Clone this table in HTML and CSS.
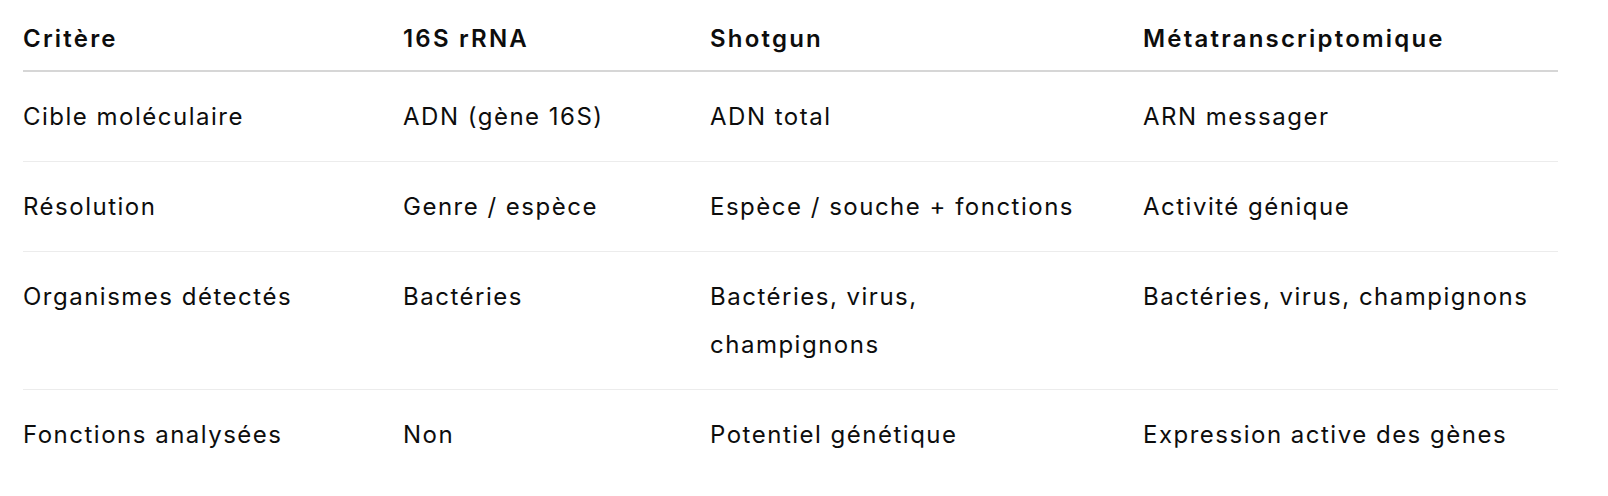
FILE: index.html
```html
<!DOCTYPE html>
<html lang="fr">
<head>
<meta charset="utf-8">
<title>Comparaison</title>
<link rel="stylesheet" href="styles.css">
</head>
<body>
<div class="wrap">
  <table class="cmp">
    <colgroup>
      <col class="c1">
      <col class="c2">
      <col class="c3">
      <col class="c4">
    </colgroup>
    <thead>
      <tr>
        <th>Critère</th>
        <th>16S rRNA</th>
        <th>Shotgun</th>
        <th>Métatranscriptomique</th>
      </tr>
    </thead>
    <tbody>
      <tr>
        <td>Cible moléculaire</td>
        <td>ADN (gène 16S)</td>
        <td>ADN total</td>
        <td>ARN messager</td>
      </tr>
      <tr>
        <td>Résolution</td>
        <td>Genre / espèce</td>
        <td>Espèce / souche + fonctions</td>
        <td>Activité génique</td>
      </tr>
      <tr>
        <td>Organismes détectés</td>
        <td>Bactéries</td>
        <td>Bactéries, virus, champignons</td>
        <td>Bactéries, virus, champignons</td>
      </tr>
      <tr>
        <td>Fonctions analysées</td>
        <td>Non</td>
        <td>Potentiel génétique</td>
        <td>Expression active des gènes</td>
      </tr>
    </tbody>
  </table>
</div>
</body>
</html>
```

FILE: styles.css
```css
html, body {
  margin: 0;
  padding: 0;
  background: #ffffff;
}

body {
  font-family: Inter, "Noto Sans", "Liberation Sans", sans-serif;
  color: #0d0d0d;
  font-size: 24px;
  line-height: 48px;
}

.wrap {
  padding: 0 0 0 23px;
}

.cmp {
  width: 1535px;
  table-layout: fixed;
  border-collapse: collapse;
  border-spacing: 0;
}

.c1 { width: 352px; }
.c2 { width: 307px; }
.c3 { width: 433px; }
.c4 { width: 443px; }

.cmp th {
  text-align: left;
  font-weight: 600;
  letter-spacing: 2.2px;
  padding: 15px 28px 7px 28px;
  border-bottom: 2px solid #d6d6d6;
  vertical-align: top;
}

.cmp td {
  padding: 21px 28px 20px 28px;
  border-bottom: 1px solid #ececec;
  vertical-align: top;
  font-weight: 400;
  letter-spacing: 1.5px;
}

.cmp tbody tr:last-child td {
  border-bottom: none;
}

.cmp th:first-child,
.cmp td:first-child {
  padding-left: 0;
}

.cmp th:last-child,
.cmp td:last-child {
  padding-right: 0;
}
```
